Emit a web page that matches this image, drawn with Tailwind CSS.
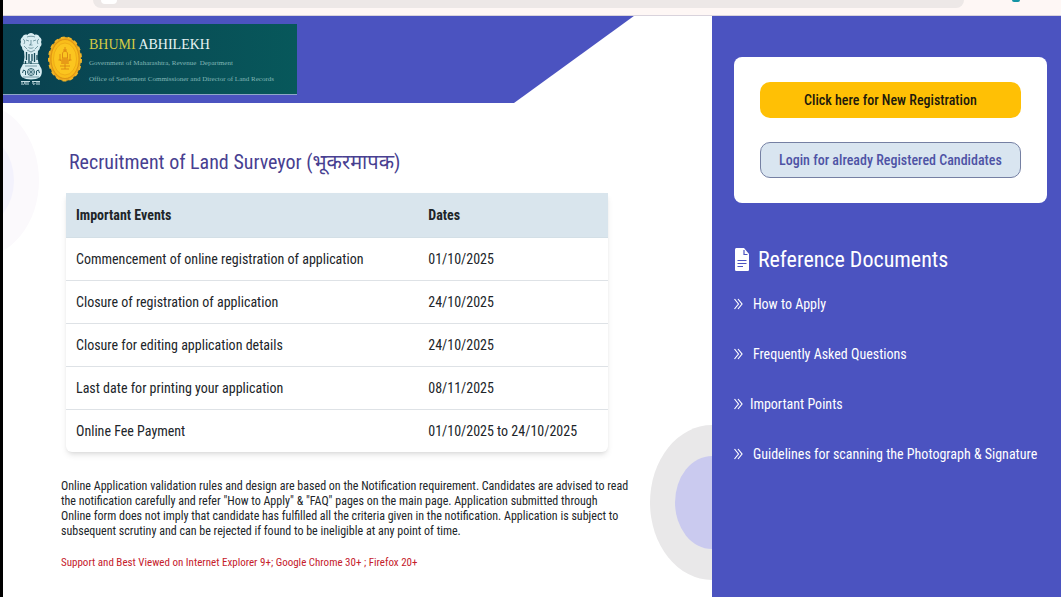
<!DOCTYPE html>
<html lang="en">
<head>
    <meta charset="UTF-8">
    <meta name="viewport" content="width=device-width, initial-scale=1.0">
    <title>Bhumi Abhilekh - Recruitment of Land Surveyor</title>
    <script src="https://cdn.jsdelivr.net/npm/@tailwindcss/browser@4"></script>
    <style>
        body {
            font-family: 'Roboto Condensed', 'Liberation Sans Narrow', Roboto, 'Noto Sans', sans-serif;
        }
    </style>
</head>
<body class="flex min-h-screen flex-col border-l-3 border-black bg-white text-sm text-[#212529]">
    <!-- Browser bar -->
    <div class="flex h-4 shrink-0 items-start border-b border-[#d9d3dc] bg-[#fef7f5] pl-[90px]">
        <div class="h-2 w-[90%] rounded-b-full bg-[#ede8e7] pl-2">
            <div class="h-1 w-4 rounded-b-full bg-white"></div>
        </div>
        <div class="ml-12 h-0.5 w-2 rounded-b-full bg-[#1494a4]"></div>
    </div>

    <div class="flex grow">
        <main class="relative grow overflow-hidden">
            <!-- Background circles -->
            <div class="absolute top-[87px] -left-[88px] flex h-[155px] w-[124px] items-center justify-center rounded-[50%] bg-[#fbf9fc]">
                <div class="h-[93px] w-[74px] rounded-[50%] bg-[#f3f2fc]"></div>
            </div>
            <div class="absolute right-0 bottom-[17px] flex h-[155px] w-[124px] translate-x-1/2 items-center justify-center rounded-[50%] bg-[#e9e8e9]">
                <div class="h-[93px] w-[74px] rounded-[50%] bg-[#cacaef]"></div>
            </div>

            <!-- Banner -->
            <header class="relative h-[87px] w-[89%] bg-[#4b53c0] pt-2 [clip-path:polygon(0_0,100%_0,81%_100%,0_100%)]">
                <div class="flex h-[71px] w-[294px] items-center border-b border-[#8fa6c8] bg-linear-to-r from-[#09404f] to-[#07585b] pl-4">
                    <svg class="h-[54px] w-6 shrink-0" viewBox="0 0 24 54" fill="none" aria-label="State Emblem of India">
                        <path fill="#d8edf2" d="M12 1c2 0 3 1 3.500 2 2-1 4.500 0 5 2 2 1 2.500 3.500 1.500 5 1 2 .5 4-1 5 0 2-1 3-2 4l-.5 6 1 6.500H4.500l1-6.500L5 19c-1.500-1-2-2.500-2-4-1.500-1-2-3.500-1-5-1-2 0-4 1.500-5 .5-2 3-3 5-2C9 2 10 1 12 1z"/>
                        <path stroke="#164b58" stroke-width=".5" d="M8 5c2-1 6-1 8 0M7 8l3 1M14 9l3-1M12 8v4l-1.500 1h3M9.500 15.500c1.500 1 3.500 1 5 0M4 7c2 1 2 3 1 5M20 7c-2 1-2 3-1 5M5 14l3 3M19 14l-3 3M8 18l4 2 4-2"/>
                        <path stroke="#164b58" stroke-width="1.300" d="M7.500 20v8M10 22v9M13 22v7M15.500 21v9M18 23v5M6.500 29v3M12 32v-3"/>
                        <path fill="#d8edf2" d="M4 32h16l1.500 3c2 2.500 2 8-1 10.500C17 48 7 48 3.500 45.500.5 43 .5 37.500 2.500 35z"/>
                        <circle cx="12" cy="40" r="3.500" stroke="#164b58" stroke-width=".8"/>
                        <path stroke="#164b58" stroke-width=".5" d="M12 36.500v7M8.500 40h7M9.500 37.500l5 5M14.500 37.500l-5 5M4 45h16M6 34h12"/>
                        <path stroke="#164b58" stroke-width=".9" d="M3.500 41l1-3 2 1v4M20.500 41l-1-3-2 1v4"/>
                        <path stroke="#d8edf2" stroke-width=".9" d="M2 49.500h9M13 49.500h8M3 50v3M5 50c2 1 0 3-1 2M7 50v3M9 50v3M14 50v2c1 1 2 0 2-1M18 50v3M20 50v3"/>
                    </svg>
                    <svg class="ml-1 h-12 w-9 shrink-0" viewBox="0 0 36 48" fill="none" aria-label="Government of Maharashtra seal">
                        <ellipse cx="18" cy="24" rx="16" ry="22" fill="#e9a51c"/>
                        <ellipse cx="18" cy="24" rx="16" ry="21.500" stroke="#f2b526" stroke-width="2" stroke-dasharray="4 3"/>
                        <ellipse cx="18" cy="24" rx="14" ry="19.500" fill="#f9bd1a" stroke="#d98d13" stroke-width=".8"/>
                        <ellipse cx="18" cy="24" rx="11.500" ry="16" fill="#fbc51f" stroke="#e79e14" stroke-width=".6"/>
                        <path stroke="#d98413" stroke-width=".9" d="M18 12v5M16 15h4M15.500 19c0-4 5-4 5 0v4h-5zM13 19v6l3 2M23 19v6l-3 2M11.500 25h3M21.500 25h3M15 28h6M13 31h10M14 34h8M18 23v11"/>
                        <path fill="#e79a17" d="M15 23h6l1 6h-8z"/>
                    </svg>
                    <div class="ml-[6px] font-['Liberation_Serif']">
                        <div class="mt-1 text-sm leading-5 whitespace-nowrap text-[#e6f4f3]"><span class="text-[#d5cb45]">BHUMI</span> ABHILEKH</div>
                        <div class="text-[7px] leading-4 whitespace-nowrap text-[#82b8b7]">Government of Maharashtra, Revenue&nbsp; Department</div>
                        <div class="text-[7px] leading-4 whitespace-nowrap text-[#82b8b7]">Office of Settlement Commissioner and Director of Land Records</div>
                    </div>
                </div>
            </header>

            <div class="relative mr-[84px] ml-[58px] pt-11">
                <h1 class="ml-2 text-xl leading-[30px] text-[#483f91]">Recruitment of Land Surveyor (भूकरमापक)</h1>
                <div class="mt-4 mr-5 ml-[5px] overflow-hidden rounded-b-md bg-white shadow-md">
                    <table class="w-full text-left">
                        <thead class="bg-[#d9e5ed]">
                            <tr class="h-11 border-b border-[#d3dfe6]">
                                <th class="w-[65%] px-[10px] font-bold">Important Events</th>
                                <th class="px-[10px] font-bold">Dates</th>
                            </tr>
                        </thead>
                        <tbody class="divide-y divide-[#dee2e6]">
                            <tr class="h-[43px]">
                                <td class="px-[10px]">Commencement of online registration of application</td>
                                <td class="px-[10px]">01/10/2025</td>
                            </tr>
                            <tr class="h-[43px]">
                                <td class="px-[10px]">Closure of registration of application</td>
                                <td class="px-[10px]">24/10/2025</td>
                            </tr>
                            <tr class="h-[43px]">
                                <td class="px-[10px]">Closure for editing application details</td>
                                <td class="px-[10px]">24/10/2025</td>
                            </tr>
                            <tr class="h-[43px]">
                                <td class="px-[10px]">Last date for printing your application</td>
                                <td class="px-[10px]">08/11/2025</td>
                            </tr>
                            <tr class="h-[43px]">
                                <td class="px-[10px]">Online Fee Payment</td>
                                <td class="px-[10px]">01/10/2025 to 24/10/2025</td>
                            </tr>
                        </tbody>
                    </table>
                </div>
                <p class="mt-[27px] text-xs leading-[15px] whitespace-nowrap">
                    Online Application validation rules and design are based on the Notification requirement. Candidates are advised to read<br>
                    the notification carefully and refer "How to Apply" &amp; "FAQ" pages on the main page. Application submitted through<br>
                    Online form does not imply that candidate has fulfilled all the criteria given in the notification. Application is subject to<br>
                    subsequent scrutiny and can be rejected if found to be ineligible at any point of time.
                </p>
                <p class="mt-[14px] text-[11px] leading-5 text-[#c5202b]">Support and Best Viewed on Internet Explorer 9+; Google Chrome 30+ ; Firefox 20+</p>
            </div>
        </main>

        <aside class="w-[33%] shrink-0 bg-[#4b53c0] pt-[41px] pr-[14px] pl-[22px] text-white">
            <div class="flex flex-col gap-6 rounded-lg bg-white px-[26px] py-[25px]">
                <button type="button" class="h-9 rounded-[10px] bg-[#ffc005] font-medium text-[#20180c]">Click here for New Registration</button>
                <button type="button" class="h-9 rounded-[10px] border border-[#7580a3] bg-[#d9e5f0] font-medium text-[#4e53a5]">Login for already Registered Candidates</button>
            </div>

            <h2 class="mt-[41px] flex items-center gap-2 text-[22px] leading-8">
                <svg class="h-6 w-4" viewBox="0 0 16 24" aria-hidden="true">
                    <path fill="#fff" d="M2.500 0H10l5 6v15.500c0 1-.7 1.500-1.500 1.500h-11C1.700 23 1 22.500 1 21.500v-20C1 .6 1.700 0 2.500 0z"/>
                    <path stroke="#4b53c0" stroke-width="1.200" fill="none" d="M10 2v4.500h3.500M3.500 12.500h9M3.500 15.500h9M3.500 18.500h5.500"/>
                </svg>
                Reference Documents
            </h2>
            <ul class="mt-[18px] flex flex-col gap-[30px] leading-5">
                <li class="flex items-center gap-[10px]">
                    <svg class="h-3 w-[9px] shrink-0" viewBox="0 0 9 12" fill="none" stroke="#fff" stroke-width="1.200" aria-hidden="true"><path d="M.5 1 4.500 6l-4 5M4 1l4 5-4 5"/></svg>
                    <a href="#">How to Apply</a>
                </li>
                <li class="flex items-center gap-[10px]">
                    <svg class="h-3 w-[9px] shrink-0" viewBox="0 0 9 12" fill="none" stroke="#fff" stroke-width="1.200" aria-hidden="true"><path d="M.5 1 4.500 6l-4 5M4 1l4 5-4 5"/></svg>
                    <a href="#">Frequently Asked Questions</a>
                </li>
                <li class="flex items-center gap-[7px]">
                    <svg class="h-3 w-[9px] shrink-0" viewBox="0 0 9 12" fill="none" stroke="#fff" stroke-width="1.200" aria-hidden="true"><path d="M.5 1 4.500 6l-4 5M4 1l4 5-4 5"/></svg>
                    <a href="#">Important Points</a>
                </li>
                <li class="flex items-center gap-[10px]">
                    <svg class="h-3 w-[9px] shrink-0" viewBox="0 0 9 12" fill="none" stroke="#fff" stroke-width="1.200" aria-hidden="true"><path d="M.5 1 4.500 6l-4 5M4 1l4 5-4 5"/></svg>
                    <a href="#" class="whitespace-nowrap">Guidelines for scanning the Photograph &amp; Signature</a>
                </li>
            </ul>
        </aside>
    </div>
</body>
</html>
